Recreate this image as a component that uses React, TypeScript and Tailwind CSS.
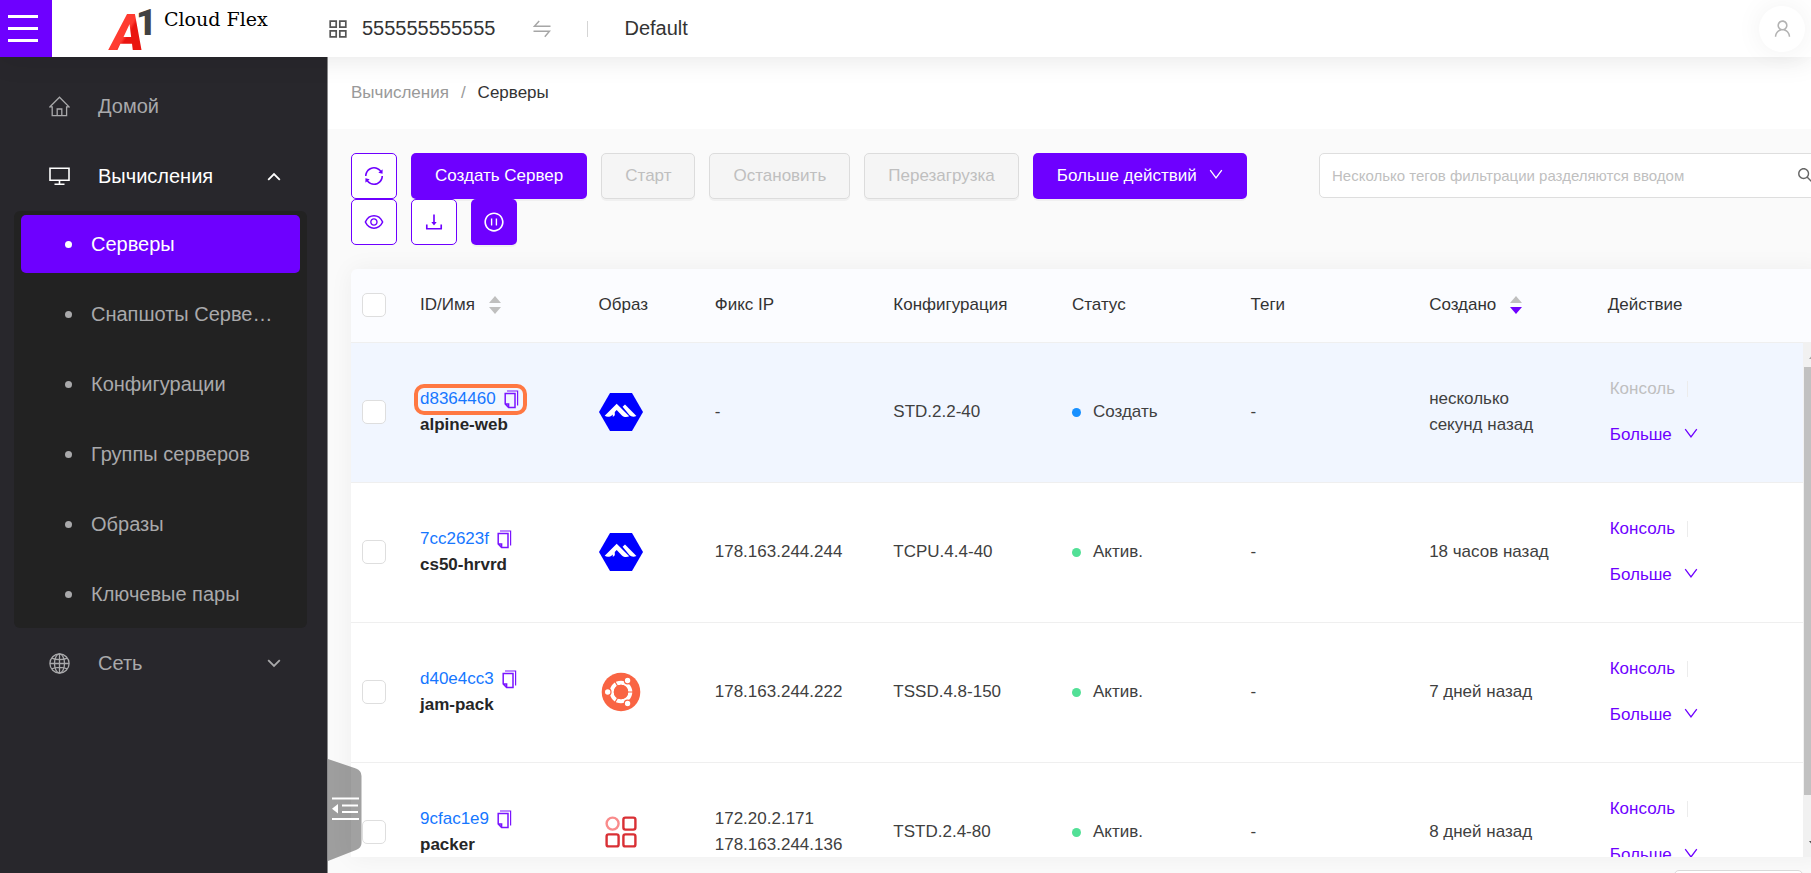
import { useState } from 'react';
import type { ReactNode } from 'react';
import {
  AiOutlineSync,
  AiOutlineEye,
  AiOutlineDownload,
  AiOutlinePauseCircle,
  AiOutlineSearch,
  AiOutlineUser,
} from 'react-icons/ai';

type OsName = 'alpine' | 'ubuntu' | 'other';

interface Server {
  id: string;
  name: string;
  os: OsName;
  ips: string[];
  flavor: string;
  status: 'building' | 'active';
  created: string;
  marked?: boolean;
}

const servers: Server[] = [
  { id: 'd8364460', name: 'alpine-web', os: 'alpine', ips: [], flavor: 'STD.2.2-40', status: 'building', created: 'несколько секунд назад', marked: true },
  { id: '7cc2623f', name: 'cs50-hrvrd', os: 'alpine', ips: ['178.163.244.244'], flavor: 'TCPU.4.4-40', status: 'active', created: '18 часов назад' },
  { id: 'd40e4cc3', name: 'jam-pack', os: 'ubuntu', ips: ['178.163.244.222'], flavor: 'TSSD.4.8-150', status: 'active', created: '7 дней назад' },
  { id: '9cfac1e9', name: 'packer', os: 'other', ips: ['172.20.2.171', '178.163.244.136'], flavor: 'TSTD.2.4-80', status: 'active', created: '8 дней назад' },
];

const subItems = ['Серверы', 'Снапшоты Серверов', 'Конфигурации', 'Группы серверов', 'Образы', 'Ключевые пары'];

/* Icons */

function HomeIcon() {
  return (
    <svg viewBox="0 0 21 21" className="size-[21px]" fill="none" stroke="currentColor" strokeWidth="1.3">
      <path d="M1 10.8 10.5 1.2 20 10.8H17.6V19.6H3.2V10.8Z" />
      <path d="M8.2 19.6V13h4.6v6.6" />
    </svg>
  );
}

function DesktopIcon() {
  return (
    <svg viewBox="0 0 21 21" className="size-[21px]" fill="none" stroke="currentColor" strokeWidth="1.6">
      <path d="M1 2.3h19v12H1zM10.5 14.3v3.6M5.5 18.2h10" />
    </svg>
  );
}

function GlobeIcon() {
  return (
    <svg viewBox="0 0 21 21" className="size-[21px]" fill="none" stroke="currentColor" strokeWidth="1.3">
      <circle cx="10.5" cy="10.5" r="9.6" />
      <ellipse cx="10.5" cy="10.5" rx="5" ry="9.6" />
      <path d="M10.5 1v19M1 10.5h19M2.8 5.2c4 2 11.4 2 15.4 0M2.8 15.8c4-2 11.4-2 15.4 0" />
    </svg>
  );
}

function Caret({ up = false }: { up?: boolean }) {
  return (
    <svg viewBox="0 0 14 9" className="h-[9px] w-3.5" fill="none" stroke="currentColor" strokeWidth="1.8">
      <path d={up ? 'M1.2 7.8 7 2l5.8 5.8' : 'M1.2 1.2 7 7l5.8-5.8'} />
    </svg>
  );
}

function DownIcon() {
  return (
    <svg viewBox="0 0 14 14" className="size-3.5" fill="none" stroke="currentColor" strokeWidth="1.3">
      <path d="M1.2 1.2 7 9 12.800 1.2" />
    </svg>
  );
}

function ProjectsIcon() {
  return (
    <svg viewBox="0 0 18 18" className="size-[18px]" fill="none" stroke="#555" strokeWidth="1.7">
      <path d="M1.2 1.2h6v6h-6zM10.8 1.2h6v6h-6zM1.2 10.8h6v6h-6zM10.8 10.8h6v6h-6z" />
    </svg>
  );
}

function SwitchIcon() {
  return (
    <svg viewBox="0 0 18 18" className="size-[18px]" fill="none" stroke="#a6a6a6" strokeWidth="1.5">
      <path d="M6.2 1 1.4 6.3H17.5M.5 11.2h16L11.8 16.8" />
    </svg>
  );
}

function CopyIcon() {
  return (
    <svg viewBox="0 0 15 19" className="h-[19px] w-[15px]" fill="none" stroke="#7a14ff" strokeWidth="1.5">
      <path d="M1.2 3.400h9.8v14H4.6L1.2 14zM1.2 14h3.4v3.4" />
      <path d="M3 1h10.600v14.6" strokeWidth="1.2" />
    </svg>
  );
}

function SortIcon({ active = false }: { active?: boolean }) {
  return (
    <svg viewBox="0 0 12 18" className="h-[18px] w-3">
      <path d="M6 0 12 7H0z" fill="#bfbfbf" />
      <path d="M0 11h12l-6 7z" fill={active ? '#6e00ff' : '#bfbfbf'} />
    </svg>
  );
}

function OsIcon({ os }: { os: OsName }) {
  if (os === 'alpine') {
    return (
      <svg viewBox="0 0 44 38" className="h-[38px] w-11" role="img" aria-label="Alpine">
        <path d="M11 0h22l11 19-11 19H11L0 19z" fill="#00f" />
        <g fill="#fff">
          <path d="M5.700 22.800C8 24.200 11 24 13 22.200l.8-.8v2.600l2-1.800v-3.200l1.900-1.900 5.200 5.300c2 1.700 4.600 2 7.300.9L17.700 10.700z" />
          <path d="M23.600 13.800 26 11.500 37.400 23c-2.600 1.100-5.100.8-7-.9z" />
        </g>
      </svg>
    );
  }
  if (os === 'ubuntu') {
    return (
      <svg viewBox="0 0 40 40" className="ml-0.5 size-10" role="img" aria-label="Ubuntu">
        <circle cx="20" cy="20" r="19.3" fill="#f96443" />
        <circle cx="20" cy="20" r="9.3" fill="none" stroke="#fff" strokeWidth="4" />
        <path d="M20 20H33M20 20 13.5 8.7M20 20l-6.5 11.3" stroke="#f96443" strokeWidth="1.2" />
        <circle cx="20" cy="20" r="7.2" fill="#f96443" />
        <g fill="#fff" stroke="#f96443" strokeWidth="1.2">
          <circle cx="6.7" cy="20" r="3.3" />
          <circle cx="26.6" cy="8.5" r="3.3" />
          <circle cx="26.6" cy="31.5" r="3.3" />
        </g>
      </svg>
    );
  }
  return (
    <svg viewBox="0 0 32 32" className="ml-1.5 size-8" fill="none" stroke="#d93035" strokeWidth="2.4" role="img" aria-label="Другой">
      <circle cx="7.6" cy="7.6" r="6" stroke="#f98b8b" />
      <rect x="18.4" y="1.6" width="12" height="12" rx="2" />
      <rect x="1.6" y="18.4" width="12" height="12" rx="2" />
      <rect x="18.4" y="18.4" width="12" height="12" rx="2" />
    </svg>
  );
}

/* Small building blocks */

function IconButton({ label, filled = false, children }: { label: string; filled?: boolean; children: ReactNode }) {
  return (
    <button
      aria-label={label}
      className={
        filled
          ? 'flex size-[46px] items-center justify-center rounded-[5px] bg-[#6e00ff] text-white shadow-[0_2px_0_rgba(0,0,0,0.04)]'
          : 'flex size-[46px] items-center justify-center rounded-[5px] border border-[#6e00ff] bg-white text-[#6e00ff]'
      }
    >
      {children}
    </button>
  );
}

function DisabledButton({ children }: { children: ReactNode }) {
  return (
    <button
      disabled
      className="h-[46px] rounded-[5px] border border-[#dcdcdc] bg-[#f5f5f5] px-[23px] text-[#bfbfbf] shadow-[0_2px_0_rgba(0,0,0,0.04)]"
    >
      {children}
    </button>
  );
}

function Checkbox({ label }: { label: string }) {
  return (
    <input
      type="checkbox"
      aria-label={label}
      className="block size-6 appearance-none rounded-[5px] border border-[#dedede] bg-white checked:bg-[#6e00ff]"
    />
  );
}

function Header() {
  return (
    <header className="relative z-20 flex h-[57px] shrink-0 items-center bg-white shadow-[0_2px_28px_rgba(0,0,0,0.1)]">
      <button aria-label="Меню" className="flex h-full w-[52px] flex-col justify-center gap-[9px] bg-[#6e00ff] pl-2">
        <span className="h-[3px] w-[30px] bg-white" />
        <span className="h-[3px] w-[30px] bg-white" />
        <span className="h-[3px] w-[30px] bg-white" />
      </button>
      <a href="#" className="flex h-full w-[277px] items-start pl-[56px]">
        <svg viewBox="0 0 48 57" className="h-[57px] w-12 overflow-visible" role="img" aria-label="A1">
          <defs>
            <linearGradient id="logoRed" x1="0" y1="0" x2="1" y2="1">
              <stop offset="0.5" stopColor="#ff3b30" />
              <stop offset="0.55" stopColor="#ea1510" />
            </linearGradient>
          </defs>
          <text x="3" y="50" fontFamily="Roboto, sans-serif" fontWeight="900" fontStyle="italic" fontSize="50" fill="url(#logoRed)">A</text>
          <text x="28" y="35" fontFamily="Roboto, sans-serif" fontWeight="900" fontSize="36" fill="#414141">1</text>
        </svg>
        <span className="pl-2 pt-[7px] font-['DejaVu_Serif',serif] text-[19px] leading-6 text-black">Cloud Flex</span>
      </a>
      <ProjectsIcon />
      <span className="pb-0.5 pl-[15px] text-xl text-[#333]">555555555555</span>
      <button aria-label="Сменить проект" className="pl-[38px]">
        <SwitchIcon />
      </button>
      <span className="ml-9 h-4 w-px bg-[#d5d5d5]" />
      <span className="pb-0.5 pl-9 text-xl text-[#333]">Default</span>
      <button
        aria-label="Профиль"
        className="ml-auto mr-1.5 flex size-[46px] items-center justify-center rounded-full bg-white text-[#b3b3b3] shadow-[0_0_28px_rgba(0,0,0,0.06)]"
      >
        <AiOutlineUser className="size-[21px]" />
      </button>
    </header>
  );
}

function Sidebar() {
  const [current, setCurrent] = useState('Серверы');

  return (
    <aside className="z-10 w-[328px] shrink-0 border-r border-[#8a8a8c] bg-[#28272c] pt-5 text-xl text-[#a9a9ab]">
      <a href="#" className="flex h-[58px] items-center pl-[49px]">
        <HomeIcon />
        <span className="pl-7">Домой</span>
      </a>
      <button className="mt-3 flex h-[58px] w-full items-center pl-[49px] pr-[46px] text-white">
        <DesktopIcon />
        <span className="pl-7">Вычисления</span>
        <span className="ml-auto">
          <Caret up />
        </span>
      </button>
      <ul className="ml-3.5 mr-5 mt-1.5 flex flex-col gap-3 rounded-md bg-[#222] px-[7px] pb-[5px] pt-1">
        {subItems.map((item) => (
          <li key={item}>
            <a
              href="#"
              onClick={() => setCurrent(item)}
              className={
                item === current
                  ? 'flex h-[58px] items-center rounded-[5px] bg-[#6e00ff] pl-11 pr-6 text-white'
                  : 'flex h-[58px] items-center rounded-[5px] pl-11 pr-6'
              }
            >
              <span className="size-[7px] shrink-0 rounded-full bg-current" />
              <span className="ml-[19px] truncate">{item}</span>
            </a>
          </li>
        ))}
      </ul>
      <button className="mt-1.5 flex h-[58px] w-full items-center pl-[49px] pr-[46px]">
        <GlobeIcon />
        <span className="pl-7">Сеть</span>
        <span className="ml-auto">
          <Caret />
        </span>
      </button>
    </aside>
  );
}

function CollapseHandle() {
  return (
    <button aria-label="Свернуть меню" className="absolute bottom-3 left-0 z-10">
      <svg viewBox="0 0 34 102" className="h-[102px] w-[34px]">
        <path d="M0 0 28 9.5Q33.5 11.5 33.5 17V84Q33.5 89 28 91L0 102z" fill="#000" fillOpacity="0.37" />
        <path d="M4 39.5H31M14 46.5H30M14 53H30M4 60H31" stroke="#fff" strokeWidth="2.2" />
        <path d="M10 45v9.500L4 49.800z" fill="#fff" />
      </svg>
    </button>
  );
}

function Toolbar() {
  return (
    <div className="flex items-start justify-between">
      <div className="flex flex-col">
        <div className="flex gap-3.5">
          <IconButton label="Обновить">
            <AiOutlineSync className="size-[22px]" />
          </IconButton>
          <button className="h-[46px] rounded-[5px] bg-[#6e00ff] px-6 text-white shadow-[0_2px_0_rgba(0,0,0,0.04)]">
            Создать Сервер
          </button>
          <DisabledButton>Старт</DisabledButton>
          <DisabledButton>Остановить</DisabledButton>
          <DisabledButton>Перезагрузка</DisabledButton>
          <button className="flex h-[46px] items-center gap-3 rounded-[5px] bg-[#6e00ff] px-6 text-white shadow-[0_2px_0_rgba(0,0,0,0.04)]">
            Больше действий
            <DownIcon />
          </button>
        </div>
        <div className="flex gap-3.5">
          <IconButton label="Видимость колонок">
            <AiOutlineEye className="size-[22px]" />
          </IconButton>
          <IconButton label="Скачать">
            <AiOutlineDownload className="size-[22px]" />
          </IconButton>
          <IconButton label="Пауза" filled>
            <AiOutlinePauseCircle className="size-[22px]" />
          </IconButton>
        </div>
      </div>
      <label className="flex h-[45px] w-[505px] items-center rounded-[5px] border border-[#dedede] bg-white pl-3 pr-2">
        <input
          type="text"
          aria-label="Фильтр"
          placeholder="Несколько тегов фильтрации разделяются вводом"
          className="min-w-0 flex-1 pt-0.5 text-[15px] outline-none placeholder:text-[#bfbfbf]"
        />
        <AiOutlineSearch className="size-[19px] text-[#666]" />
      </label>
    </div>
  );
}

function ServerRow({ server }: { server: Server }) {
  const building = server.status === 'building';

  return (
    <tr className={building ? 'h-[140px] border-b border-[#efefef] bg-[#f1f6ff]' : 'h-[140px] border-b border-[#efefef] bg-white'}>
      <td className="pl-[11px]">
        <Checkbox label={server.name} />
      </td>
      <td className="px-2.5">
        <div className="relative flex h-[26px] items-center gap-2">
          <a href="#" className="text-[#1677ff]">{server.id}</a>
          <button aria-label="Копировать ID">
            <CopyIcon />
          </button>
          {server.marked && (
            <span className="pointer-events-none absolute -left-1.5 -top-0.5 h-[31px] w-[113px] rounded-[10px] border-4 border-[#ff7842]" />
          )}
        </div>
        <div className="font-bold text-[#262626]">{server.name}</div>
      </td>
      <td className="px-2.5">
        <OsIcon os={server.os} />
      </td>
      <td className="px-2.5">
        {server.ips.length ? server.ips.map((ip) => <div key={ip}>{ip}</div>) : '-'}
      </td>
      <td className="px-2.5">{server.flavor}</td>
      <td className="px-2.5">
        <div className="flex items-center gap-3">
          <span className={building ? 'size-[9px] rounded-full bg-[#1890ff]' : 'size-[9px] rounded-full bg-[#52e096]'} />
          {building ? 'Создать' : 'Актив.'}
        </div>
      </td>
      <td className="px-2.5">-</td>
      <td className="pl-2.5 pr-10">{server.created}</td>
      <td className="px-3">
        <div className="flex h-[46px] items-center gap-3">
          <button disabled={building} className="text-[#6e00ff] disabled:text-[#bfbfbf]">Консоль</button>
          <span className="h-4 w-px bg-[#ececec]" />
        </div>
        <button className="flex h-[46px] items-center gap-3 text-[#6e00ff]">
          Больше
          <DownIcon />
        </button>
      </td>
    </tr>
  );
}

function ServersTable() {
  return (
    <div className="mt-6 flex min-h-0 flex-1 overflow-hidden rounded-t-md bg-[#fbfcff] shadow-[0_0_24px_rgba(0,0,0,0.05)]">
      <div className="min-w-0 flex-1 overflow-hidden">
        <table className="w-full table-fixed border-collapse text-left leading-[26px] text-[#404040]">
          <colgroup>
            <col className="w-[59px]" />
            <col className="w-[12.3%]" />
            <col className="w-[8%]" />
            <col className="w-[12.3%]" />
            <col className="w-[12.3%]" />
            <col className="w-[12.3%]" />
            <col className="w-[12.3%]" />
            <col className="w-[12.3%]" />
            <col />
          </colgroup>
          <thead>
            <tr className="h-[73px] border-b border-[#efefef] text-[#333]">
              <th className="pl-[11px]">
                <Checkbox label="Выбрать все" />
              </th>
              <th className="px-2.5 font-normal">
                <button className="flex items-center gap-3.5">
                  ID/Имя
                  <SortIcon />
                </button>
              </th>
              <th className="px-2.5 font-normal">Образ</th>
              <th className="px-2.5 font-normal">Фикс IP</th>
              <th className="px-2.5 font-normal">Конфигурация</th>
              <th className="px-2.5 font-normal">Статус</th>
              <th className="px-2.5 font-normal">Теги</th>
              <th className="px-2.5 font-normal">
                <button className="flex items-center gap-3.5">
                  Создано
                  <SortIcon active />
                </button>
              </th>
              <th className="px-2.5 font-normal">Действие</th>
            </tr>
          </thead>
          <tbody>
            {servers.map((server) => (
              <ServerRow key={server.id} server={server} />
            ))}
          </tbody>
        </table>
      </div>
      {/* Scrollbar */}
      <div className="flex w-[21px] flex-col pt-[73px]">
        <div className="flex flex-1 flex-col items-center bg-[#f1f1f1]">
          <svg viewBox="0 0 10 25" className="h-[25px] w-2.5">
            <path d="M0 17 5 11l5 6z" fill="#a3a3a3" />
          </svg>
          <div className="w-[19px] flex-1 bg-[#c1c1c1]" />
          <svg viewBox="0 0 10 62" className="h-[62px] w-2.5">
            <path d="M0 46h10l-5 6z" fill="#505050" />
          </svg>
        </div>
      </div>
    </div>
  );
}

export default function App() {
  return (
    <div className="flex h-screen flex-col overflow-hidden bg-[#fafafa] font-['Liberation_Sans',Arial,sans-serif] text-[17px]">
      <Header />
      <div className="flex min-h-0 flex-1">
        <Sidebar />
        <main className="relative flex min-w-0 flex-1 flex-col">
          <nav className="flex h-[72px] shrink-0 items-center gap-3 bg-white pl-[23px]">
            <a href="#" className="text-[#999]">Вычисления</a>
            <span className="text-[#999]">/</span>
            <span className="text-[#333]">Серверы</span>
          </nav>
          <CollapseHandle />
          {/* Content is a little wider than the window and is cut at the right */}
          <div className="-mr-[13px] flex min-h-0 flex-1 flex-col pl-[23px] pt-6">
            <Toolbar />
            <ServersTable />
            <div className="flex h-4 shrink-0 items-start justify-end overflow-hidden pr-[21px] pt-[13px]">
              <div className="h-10 w-[129px] rounded-[5px] border border-[#d9d9d9] bg-white" />
            </div>
          </div>
        </main>
      </div>
    </div>
  );
}
